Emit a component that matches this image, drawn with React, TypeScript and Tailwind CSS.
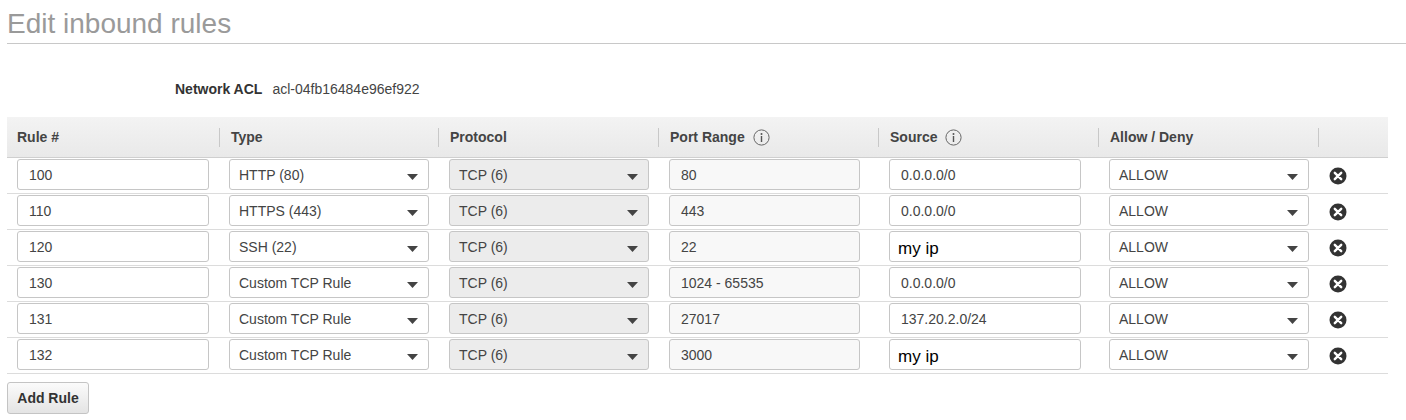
import React from 'react';

type Rule = {
  num: string;
  type: string;
  port: string;
  source: string;
  typed?: boolean;
};

const rules: Rule[] = [
  { num: '100', type: 'HTTP (80)', port: '80', source: '0.0.0.0/0' },
  { num: '110', type: 'HTTPS (443)', port: '443', source: '0.0.0.0/0' },
  { num: '120', type: 'SSH (22)', port: '22', source: 'my ip', typed: true },
  { num: '130', type: 'Custom TCP Rule', port: '1024 - 65535', source: '0.0.0.0/0' },
  { num: '131', type: 'Custom TCP Rule', port: '27017', source: '137.20.2.0/24' },
  { num: '132', type: 'Custom TCP Rule', port: '3000', source: 'my ip', typed: true },
];

function InfoIcon() {
  return (
    <svg width="17" height="17" viewBox="0 0 17 17" className="ml-2 shrink-0">
      <circle cx="8.5" cy="8.5" r="7.6" fill="none" stroke="#666" strokeWidth="1" />
      <circle cx="8.5" cy="5" r="1" fill="#555" />
      <rect x="7.8" y="7" width="1.4" height="6" fill="#555" />
    </svg>
  );
}

function Caret() {
  return (
    <svg width="11" height="6" viewBox="0 0 11 6" className="absolute right-[10px] top-[14px]">
      <path d="M0 0 L11 0 L5.5 6 Z" fill="#444" />
    </svg>
  );
}

function RemoveIcon() {
  return (
    <svg width="18" height="18" viewBox="0 0 18 18">
      <circle cx="9" cy="9" r="8.5" fill="#333" />
      <path d="M5.8 5.8 L12.2 12.2 M12.2 5.8 L5.8 12.2" stroke="#fff" strokeWidth="2.4" strokeLinecap="round" />
    </svg>
  );
}

function TextBox({ value, className = '', big = false }: { value: string; className?: string; big?: boolean }) {
  return (
    <div
      className={`h-[31px] border border-[#c6c6c6] rounded-[3px] flex items-center ${
        big ? 'pl-[8px] pt-[4px] text-[17px] text-black' : 'pl-[11px] pt-[2px] text-[14px] text-[#444]'
      } ${className}`}
    >
      {value}
    </div>
  );
}

function SelectBox({ value, disabled = false }: { value: string; disabled?: boolean }) {
  return (
    <div
      className={`relative h-[31px] w-[200px] border border-[#c6c6c6] rounded-[3px] flex items-center pl-[9px] pt-[2px] text-[14px] text-[#444] ${
        disabled ? 'bg-[#ececec]' : 'bg-white'
      }`}
    >
      {value}
      <Caret />
    </div>
  );
}

function HeaderCell({ label, info = false, first = false }: { label: string; info?: boolean; first?: boolean }) {
  return (
    <div className="flex items-center h-full">
      {!first && <div className="w-px h-[19px] bg-[#c8c8c8]" />}
      <div className={`flex items-center ${first ? 'pl-[10px]' : 'pl-[11px]'}`}>
        {label}
        {info && <InfoIcon />}
      </div>
    </div>
  );
}

export default function App() {
  const cols = 'grid grid-cols-[212px_219px_220px_220px_220px_220px_70px]';

  return (
    <div className="w-[1406px] h-[420px] bg-white font-['Liberation_Sans',Arial,sans-serif] text-[14px] text-[#444]">
      {/* Title */}
      <div className="ml-[7px] pt-[8px] pb-[3px] border-b border-[#c8c8c8]">
        <h1 className="text-[28px] leading-[32px] text-[#9a9a9a]">Edit inbound rules</h1>
      </div>

      {/* Network ACL */}
      <div className="mt-[35px] pl-[175px] flex items-center h-[20px] leading-[20px]">
        <span className="font-bold text-[#333]">Network ACL</span>
        <span className="ml-[10px] text-[#444]">acl-04fb16484e96ef922</span>
      </div>

      {/* Rules table */}
      <div className="ml-[7px] mt-[18px] w-[1381px]">
        <div className={`${cols} h-[41px] bg-gradient-to-b from-[#f3f3f3] to-[#e9e9e9] border-b border-[#cfcfcf] font-bold text-[#444]`}>
          <HeaderCell label="Rule #" first />
          <HeaderCell label="Type" />
          <HeaderCell label="Protocol" />
          <HeaderCell label="Port Range" info />
          <HeaderCell label="Source" info />
          <HeaderCell label="Allow / Deny" />
          <HeaderCell label="" />
        </div>

        {rules.map((r) => (
          <div key={r.num} className={`${cols} h-[36px] pt-px border-b border-[#dcdcdc]`}>
            <div className="pl-[10px]">
              <TextBox value={r.num} className="w-[192px] bg-white" />
            </div>
            <div className="pl-[10px]">
              <SelectBox value={r.type} />
            </div>
            <div className="pl-[11px]">
              <SelectBox value="TCP (6)" disabled />
            </div>
            <div className="pl-[11px]">
              <TextBox value={r.port} className="w-[191px] bg-[#f8f8f8]" />
            </div>
            <div className="pl-[11px]">
              <TextBox value={r.source} className="w-[192px] bg-white" big={r.typed} />
            </div>
            <div className="pl-[11px]">
              <SelectBox value="ALLOW" />
            </div>
            <div className="pl-[11px] h-[33px] flex items-center">
              <RemoveIcon />
            </div>
          </div>
        ))}

        <button className="mt-[8px] h-[32px] w-[82px] rounded-[3px] border border-[#c4c4c4] bg-gradient-to-b from-[#fbfbfb] to-[#e4e4e4] font-bold text-[14px] text-[#333]">
          Add Rule
        </button>
      </div>
    </div>
  );
}
